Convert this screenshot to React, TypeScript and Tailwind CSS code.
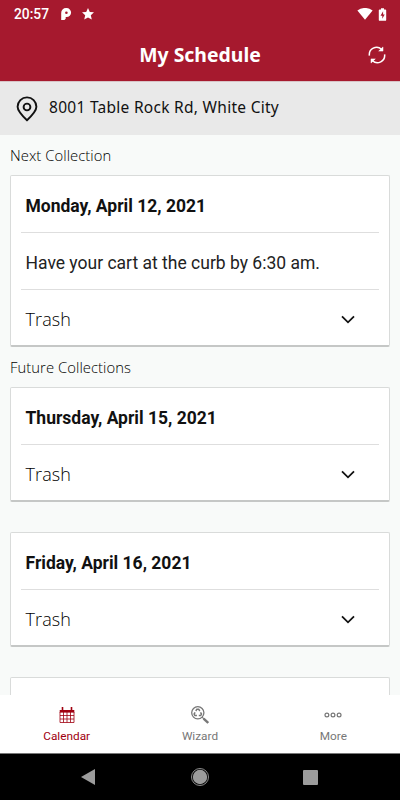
import type { ReactNode } from "react";

function StatusBar() {
  return (
    <div className="flex h-7 items-center pl-[14px] pr-[13.5px]">
      <span className="font-['Roboto',sans-serif] text-[13.8px] font-medium leading-7">20:57</span>
      <svg className="ml-[12px] h-3 w-3" viewBox="0 0 12 12" fill="currentColor">
        <path
          fillRule="evenodd"
          d="M.2 12V5A4.8 4.8 0 0 1 5 .1h.6a4.5 4.5 0 0 1 0 9H4.7v1.7L3.4 12ZM5.4 3.5a1.3 1.3 0 1 0 0 2.6 1.3 1.3 0 0 0 0-2.6Z"
        />
      </svg>
      <svg className="ml-[8.5px] h-3 w-3" viewBox="0 0 12 12" fill="currentColor">
        <path d="m6 0 1.8 3.9 4.2.4-3.2 2.9 1 4.4L6 9.4l-3.8 2.2 1-4.4L0 4.3l4.2-.4Z" />
      </svg>
      <svg className="ml-auto h-3 w-4" viewBox="0 0 16 12" fill="currentColor">
        <path d="M.4 2.6a12.2 12.2 0 0 1 15.2 0L8 11.8Z" />
      </svg>
      <svg className="ml-[5px] h-[13px] w-[9px]" viewBox="0 0 9 13">
        <path fill="currentColor" d="M3 .2h3v1.2h1.3c.5 0 .9.4.9.9v9.6c0 .5-.4.9-.9.9H1.7a.9.9 0 0 1-.9-.9V2.3c0-.5.4-.9.9-.9H3Z" />
        <path fill="#a6192e" d="M5.1 3.2 2.5 7.7h1.8v3.1l2.4-4.3H5.1Z" />
      </svg>
    </div>
  );
}

function Card({ date, note }: { date: string; note?: string }) {
  return (
    <div className="rounded-[2px] border border-b-2 border-[#d9dbda] border-b-[#c5c7c6] bg-white px-[10px] text-[#111]">
      <h2 className="h-[57px] border-b border-[#dedede] pl-[4.5px] font-['Roboto',sans-serif] text-[17.5px] font-bold leading-[60px]">
        {date}
      </h2>
      {note && (
        <p className="h-[57px] border-b border-[#dedede] pl-[4.5px] font-['Roboto',sans-serif] text-[17.5px] leading-[60px] text-[#222]">
          {note}
        </p>
      )}
      <div className="flex h-[55px] items-center justify-between pl-[4.5px] pr-[24.5px] pt-[3px]">
        <span className="font-['Open_Sans',sans-serif] text-[18px] font-[350] tracking-[0.1px] text-black">Trash</span>
        <svg className="h-[9px] w-[14px]" viewBox="0 0 14 9" fill="none" stroke="currentColor" strokeWidth="1.8">
          <path d="m1 1.3 6 6 6-6" />
        </svg>
      </div>
    </div>
  );
}

function SectionLabel({ children }: { children: ReactNode }) {
  return (
    <p className="h-10 font-['Open_Sans',sans-serif] text-[14.8px] font-[350] leading-[41px] tracking-[0.06px] text-black">
      {children}
    </p>
  );
}

function Tab({ label, active, children }: { label: string; active?: boolean; children: ReactNode }) {
  return (
    <div className={`flex flex-1 flex-col items-center pt-[10px] ${active ? "text-[#a00010]" : "text-[#777]"}`}>
      <div className="flex h-5 items-center">{children}</div>
      <span className="mt-[3px] font-['Roboto',sans-serif] text-[11.8px] leading-[17px]">{label}</span>
    </div>
  );
}

export default function App() {
  return (
    <main className="flex h-[800px] w-[400px] flex-col overflow-hidden bg-[#f8faf9]">
      <header className="h-[81px] shrink-0 bg-[#a6192e] text-white">
        <StatusBar />
        <div className="grid h-[53px] grid-cols-[40px_1fr_40px] items-center">
          <h1 className="col-start-2 text-center font-['Noto_Sans',sans-serif] text-[19.4px] font-bold leading-7">
            My Schedule
          </h1>
          <svg className="ml-2 h-[18px] w-[18px]" viewBox="0 0 18 18" fill="none" stroke="currentColor" strokeWidth="1.5">
            <path d="M1.4 9.6A7.3 7.3 0 0 1 13.5 3.2M16.6 8.4A7.3 7.3 0 0 1 4.5 14.8" />
            <path d="M15 .9v4.2h-4.3ZM3 17.1v-4.2h4.3Z" fill="currentColor" strokeWidth=".5" />
          </svg>
        </div>
      </header>

      {/* Address */}
      <div className="flex h-[54px] shrink-0 items-center border-t border-[#d8c4c7] bg-[#e9e9e9] pl-4 text-[#111]">
        <svg className="h-[26px] w-[22px]" viewBox="0 0 22 26" fill="none" stroke="currentColor" strokeWidth="1.9">
          <path d="M11 24.2C7 20.5 1.6 15.5 1.6 10.8a9.4 9.4 0 0 1 18.8 0c0 4.7-5.4 9.7-9.4 13.4Z" />
          <circle cx="11" cy="11" r="3.4" />
        </svg>
        <span className="ml-[11px] pb-[2px] font-['Noto_Sans',sans-serif] text-[15.5px] tracking-[0.28px]">
          8001 Table Rock Rd, White City
        </span>
      </div>

      {/* Schedule */}
      <div className="min-h-0 flex-1 overflow-hidden px-[10px]">
        <SectionLabel>Next Collection</SectionLabel>
        <Card date="Monday, April 12, 2021" note="Have your cart at the curb by 6:30 am." />
        <SectionLabel>Future Collections</SectionLabel>
        <div className="flex flex-col gap-[30px]">
          <Card date="Thursday, April 15, 2021" />
          <Card date="Friday, April 16, 2021" />
          <div className="h-[18px] rounded-t-[2px] border border-b-0 border-[#d9dbda] bg-white" />
        </div>
      </div>

      <nav className="flex h-[58px] shrink-0 bg-white">
        <Tab label="Calendar" active>
          <svg className="h-4 w-4" viewBox="0 0 16 16" fill="none" stroke="currentColor">
            <path d="M.7 3h14.6v2.6H.7Z" fill="currentColor" stroke="none" />
            <path d="M3.5 0v4M12.5 0v4" strokeWidth="1.6" />
            <path d="M1 5v10.5h14V5M4.5 5v10.5M8 5v10.5M11.5 5v10.5M1 8.5h14M1 12h14" strokeWidth=".8" />
          </svg>
        </Tab>
        <Tab label="Wizard">
          <svg className="h-[18px] w-[18px]" viewBox="0 0 18 18" fill="none" stroke="currentColor">
            <circle cx="6.8" cy="6.8" r="6.1" strokeWidth="1.3" />
            <path d="m11.2 11.2 1.6 1.6" strokeWidth="1.2" />
            <path d="m12.6 12.6 4.6 4.4" strokeWidth="2.4" />
            <path d="m4.8 5 1.1-1.8h1.8L8.8 5M9.5 6.3l1 1.8-.8 1.4H7.8M5.9 9.5h-2l-.8-1.4 1-1.8" strokeWidth="1.5" />
          </svg>
        </Tab>
        <Tab label="More">
          <svg className="h-[6px] w-[18px]" viewBox="0 0 18 6" fill="none" stroke="currentColor" strokeWidth="1.2">
            <circle cx="2.9" cy="3" r="1.9" />
            <circle cx="9" cy="3" r="1.9" />
            <circle cx="15.1" cy="3" r="1.9" />
          </svg>
        </Tab>
      </nav>

      {/* System navigation */}
      <div className="flex h-[47px] shrink-0 items-center justify-between border-t border-[#777] bg-black pl-[81px] pr-[82px] text-[#9c9c9c]">
        <svg className="h-4 w-[14px]" viewBox="0 0 14 16" fill="currentColor">
          <path d="M14 0v16L0 8Z" />
        </svg>
        <svg className="ml-px h-[18px] w-[18px]" viewBox="0 0 18 18" fill="currentColor">
          <circle cx="9" cy="9" r="7.2" />
          <circle cx="9" cy="9" r="8.5" fill="none" stroke="currentColor" strokeWidth=".9" />
        </svg>
        <div className="h-[15px] w-[15px] rounded-[1px] bg-[#9c9c9c]" />
      </div>
    </main>
  );
}
